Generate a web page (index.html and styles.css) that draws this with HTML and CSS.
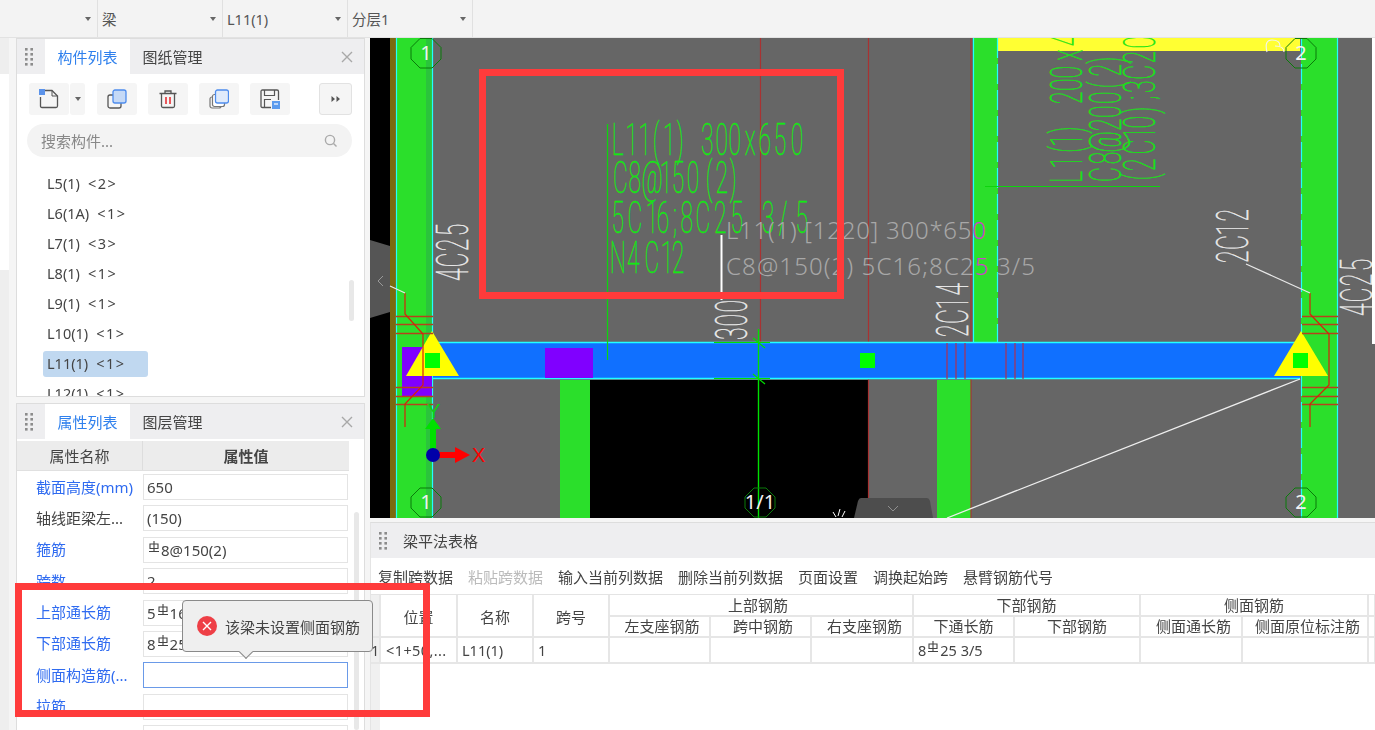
FILE: index.html
```html
<!DOCTYPE html>
<html>
<head>
	<meta charset="utf-8">
	<title>梁平法表格</title>
	<link rel="stylesheet" href="styles.css">
</head>

<body>
	<svg class="defs" width="0" height="0">
		<symbol id="dots" viewBox="0 0 8 18">
			<g fill="#8c8c8c">
				<rect x="0" y="0" width="2.6" height="2.6"/><rect x="5.4" y="0" width="2.6" height="2.6"/>
				<rect x="0" y="5" width="2.6" height="2.6"/><rect x="5.4" y="5" width="2.6" height="2.6"/>
				<rect x="0" y="10" width="2.6" height="2.6"/><rect x="5.4" y="10" width="2.6" height="2.6"/>
				<rect x="0" y="15" width="2.6" height="2.6"/><rect x="5.4" y="15" width="2.6" height="2.6"/>
			</g>
		</symbol>
		<symbol id="rebar" viewBox="0 0 12 12">
			<path d="M6 0V11M2 3H10V7.5H2ZM1 10.5H11" fill="none" stroke="#444" stroke-width="1.1"/>
		</symbol>
	</svg>

	<div class="topbar">
		<div class="top-item top-first"><span class="caret"></span></div>
		<div class="top-item"><span>梁</span><span class="caret"></span></div>
		<div class="top-item"><span>L11(1)</span><span class="caret"></span></div>
		<div class="top-item"><span>分层1</span><span class="caret"></span></div>
	</div>

	<div class="main">
		<div class="sidebar">
			<div class="strip">
				<div class="strip-head"></div>
				<div class="strip-body"></div>
				<div class="strip-rest"></div>
			</div>

			<div class="panels">
				<div class="panel panel-list">
					<div class="panel-head">
						<svg class="dots"><use href="#dots"/></svg>
						<div class="tab active">构件列表</div>
						<div class="tab">图纸管理</div>
						<svg class="close" viewBox="0 0 12 12"><path d="M1 1L11 11M11 1L1 11" stroke="#a8a8a8" stroke-width="1.4"/></svg>
					</div>

					<div class="tools">
						<div class="tool tool-new">
							<svg viewBox="0 0 20 20" width="20" height="20"><path d="M6 1.5H13L18.5 7V17Q18.5 18.5 17 18.5H3Q1.5 18.5 1.5 17V8" fill="none" stroke="#555" stroke-width="1.3"/><path d="M13 1.5V7H18.5" fill="none" stroke="#555" stroke-width="1"/><rect x="0" y="0" width="6" height="6" fill="#5b93ea"/></svg>
						</div>
						<div class="tool tool-drop"><span class="caret"></span></div>
						<div class="tool">
							<svg viewBox="0 0 20 20" width="20" height="20"><rect x="1" y="6" width="13" height="13" rx="2" fill="none" stroke="#555" stroke-width="1.3"/><rect x="6" y="1" width="13" height="13" rx="2" fill="#c5d9f6" stroke="#4d8ced" stroke-width="1.3"/></svg>
						</div>
						<div class="tool">
							<svg viewBox="0 0 20 20" width="20" height="20"><path d="M1.5 4.5H18.5M7 4.5V2H13V4.5M3.5 4.5V17Q3.5 18.5 5 18.5H15Q16.5 18.5 16.5 17V4.5" fill="none" stroke="#555" stroke-width="1.3"/><path d="M8 8V15M12 8V15" stroke="#e8474c" stroke-width="1.8"/></svg>
						</div>
						<div class="tool">
							<svg viewBox="0 0 20 20" width="20" height="20"><rect x="1" y="8" width="11" height="11" rx="2" fill="none" stroke="#777" stroke-width="1.2"/><rect x="3.5" y="5.5" width="12" height="12" rx="2" fill="#fff" stroke="#777" stroke-width="1.2"/><rect x="6.5" y="1" width="13" height="13" rx="2" fill="#e0ebfb" stroke="#4d8ced" stroke-width="1.3"/></svg>
						</div>
						<div class="tool">
							<svg viewBox="0 0 20 20" width="20" height="20"><path d="M11 18.5H2.5Q1 18.5 1 17V2.5Q1 1 2.5 1H17Q18.5 1 18.5 2.5V11" fill="none" stroke="#555" stroke-width="1.3"/><path d="M4.5 1V6.5H14.5V1M4.5 18V10.5H11" fill="none" stroke="#555" stroke-width="1.2"/><rect x="12" y="12" width="8" height="8" fill="#5b9bee"/><path d="M14 15H18" stroke="#fff" stroke-width="1.2"/></svg>
						</div>
						<div class="tool tool-more">
							<svg viewBox="0 0 10 8" width="10" height="8"><path d="M0.5 1L4 4L0.5 7ZM5.5 1L9 4L5.5 7Z" fill="#555"/></svg>
						</div>
					</div>

					<div class="search">
						<span>搜索构件...</span>
						<svg viewBox="0 0 14 14" width="14" height="14"><circle cx="6" cy="6" r="4.6" fill="none" stroke="#aaa" stroke-width="1.4"/><path d="M9.5 9.5L12.5 12.5" stroke="#aaa" stroke-width="1.4"/></svg>
					</div>

					<div class="list">
						<div class="list-item"><span>L5(1)<b>&lt;2&gt;</b></span></div>
						<div class="list-item"><span>L6(1A)<b>&lt;1&gt;</b></span></div>
						<div class="list-item"><span>L7(1)<b>&lt;3&gt;</b></span></div>
						<div class="list-item"><span>L8(1)<b>&lt;1&gt;</b></span></div>
						<div class="list-item"><span>L9(1)<b>&lt;1&gt;</b></span></div>
						<div class="list-item"><span>L10(1)<b>&lt;1&gt;</b></span></div>
						<div class="list-item selected"><span>L11(1)<b>&lt;1&gt;</b></span></div>
						<div class="list-item"><span>L12(1)<b>&lt;1&gt;</b></span></div>
						<div class="scroll scroll-list"></div>
					</div>
				</div>

				<div class="panel panel-props">
					<div class="panel-head">
						<svg class="dots"><use href="#dots"/></svg>
						<div class="tab active">属性列表</div>
						<div class="tab">图层管理</div>
						<svg class="close" viewBox="0 0 12 12"><path d="M1 1L11 11M11 1L1 11" stroke="#a8a8a8" stroke-width="1.4"/></svg>
					</div>

					<div class="prop-head">
						<div class="prop-head-name">属性名称</div>
						<div class="prop-head-value">属性值</div>
					</div>

					<div class="prop-rows">
						<div class="prop-row"><div class="prop-name link">截面高度(mm)</div><div class="prop-value">650</div></div>
						<div class="prop-row"><div class="prop-name">轴线距梁左...</div><div class="prop-value">(150)</div></div>
						<div class="prop-row"><div class="prop-name link">箍筋</div><div class="prop-value"><svg class="rebar"><use href="#rebar"/></svg>8@150(2)</div></div>
						<div class="prop-row"><div class="prop-name link">跨数</div><div class="prop-value">2</div></div>
						<div class="prop-row"><div class="prop-name link">上部通长筋</div><div class="prop-value">5<svg class="rebar"><use href="#rebar"/></svg>16</div></div>
						<div class="prop-row"><div class="prop-name link">下部通长筋</div><div class="prop-value">8<svg class="rebar"><use href="#rebar"/></svg>25 3/5</div></div>
						<div class="prop-row"><div class="prop-name link">侧面构造筋(...</div><div class="prop-value focused"></div></div>
						<div class="prop-row"><div class="prop-name link">拉筋</div><div class="prop-value"></div></div>
						<div class="prop-row"><div class="prop-name"></div><div class="prop-value"></div></div>
					</div>
					<div class="scroll scroll-props"></div>
				</div>
			</div>
		</div>

		<div class="workspace">
			<div class="canvas">
				<svg class="drawing" viewBox="370 38 1005 480" width="1005" height="480">
					<rect x="370" y="38" width="1005" height="480" fill="#666"/>
					<rect x="370" y="38" width="20" height="480" fill="#000"/>
					<path d="M370 240L390 246V312L370 318Z" fill="#555"/>
					<path d="M383 276L378 281L383 286" fill="none" stroke="#999" stroke-width="1"/>
					<rect x="590" y="380" width="278" height="138" fill="#000"/>
					<rect x="998" y="38" width="302" height="13" fill="#ffff33"/>

					<rect x="390" y="38" width="6" height="480" fill="#7a6a10"/>
					<rect x="396" y="38" width="37" height="480" fill="#2bdf2b"/>
					<rect x="426" y="38" width="6" height="480" fill="#2bc43c"/>
					<rect x="560" y="380" width="30" height="138" fill="#2bdf2b"/>
					<rect x="937" y="380" width="34" height="138" fill="#2bdf2b"/>
					<rect x="973" y="38" width="25" height="304" fill="#2bdf2b"/>
					<rect x="1301" y="38" width="37" height="480" fill="#2bdf2b"/>

					<path d="M396.5 38V518M432.5 38V518M973.5 38V342M1337.5 38V518" stroke="#2ff" stroke-width="1.2"/>
					<path d="M997.5 38V342M1301.5 38V518" stroke="#2ff" stroke-width="1.2" stroke-dasharray="20 6"/>
					<path d="M760.5 38V342M868.5 38V518M971 38V518" stroke="#a83232" stroke-width="1.2"/>

					<rect x="433" y="342" width="867" height="37" fill="#1070ff"/>
					<path d="M433 342.5H1300M433 378.5H1300" stroke="#2ff" stroke-width="1.6"/>
					<path d="M947 343V379M956 343V379M965 343V379M1006 343V379M1015 343V379M1023 343V379" stroke="#b03050" stroke-width="1.2"/>

					<rect x="402" y="347" width="30" height="50" fill="#8000ff"/>
					<rect x="545" y="348" width="48" height="30" fill="#8000ff"/>
					<path d="M432 331L459 376H406Z" fill="#ffff00"/>
					<path d="M1301 331L1328 376H1274Z" fill="#ffff00"/>
					<rect x="425" y="353" width="15" height="15" fill="#00ff00"/>
					<rect x="860" y="353" width="15" height="15" fill="#00ff00"/>
					<rect x="1293" y="353" width="15" height="15" fill="#00ff00"/>

					<path d="M396 316.5H433M396 324.5H433M396 333.5H433M396 387.5H433M396 396.5H433M396 404.5H433M1302 316.5H1338M1302 324.5H1338M1302 333.5H1338M1302 387.5H1338M1302 396.5H1338M1302 404.5H1338" stroke="#b8401c" stroke-width="1.3"/>
					<path d="M405 293V314L423 334V385L405 404V427M1310 293V314L1329 334V385L1310 404V427" fill="none" stroke="#d8200c" stroke-width="1.2"/>
					<path d="M390 286L405 293M1246 264L1310 293" stroke="#e8e8e8" stroke-width="1.2" fill="none"/>
					<path d="M947 518L1300 379" stroke="#eee" stroke-width="1.3"/>

					<path d="M607.5 124V360M985 186.5H1160" stroke="#0ed40e" stroke-width="1.2"/>
					<path d="M758.5 329V518" stroke="#00e000" stroke-width="1.4"/>
					<path d="M714 342.5H770M714 378.5H770M753 338L765 348M753 374L765 384" stroke="#00e000" stroke-width="1.2"/>
					<path d="M721.5 235V300" stroke="#fff" stroke-width="2"/>

					<text class="cad cad-green" transform="translate(612 155) scale(.52 1)" x="11 38 63 85 110 131 156 183 211 236 266 294 323 356">L11(1) 300x650</text>
					<text class="cad cad-green" transform="translate(612 193) scale(.52 1)" x="16 44 77 104 127 156 187 211 233">C8@150(2)</text>
					<text class="cad cad-green" transform="translate(612 233) scale(.52 1)" x="11 44 77 98 121 144 175 208 240 269 300 329 365">5C16;8C25 3/5</text>
					<text class="cad cad-green" transform="translate(612 273) scale(.52 1)" x="11 41 77 106 127">N4C12</text>

					<text class="cad cad-green" transform="translate(1082 182) rotate(-90) scale(.52 1)" x="10 38 63 80 100 130 162 187 211 244 273 302 329">L1(1) 200x400</text>
					<text class="cad cad-green" transform="translate(1121 182) rotate(-90) scale(.52 1)" x="14 46 77 110 135 162 187 215 234">C8@200(2)</text>
					<text class="cad cad-green" transform="translate(1155 182) rotate(-90) scale(.52 1)" x="10 33 67 94 115 138 162 183 211 240 269">(2C10);3C20</text>

					<text class="cad cad-white" transform="translate(468 283) rotate(-90) scale(.52 1)" x="16 44 73 102">4C25</text>
					<text class="cad cad-white" transform="translate(747 342) rotate(-90) scale(.52 1)" x="16 42 69">300</text>
					<text class="cad cad-white" transform="translate(968 338) rotate(-90) scale(.52 1)" x="14 41 67 94">2C14</text>
					<text class="cad cad-white" transform="translate(1248 264) rotate(-90) scale(.52 1)" x="14 41 67 94">2C12</text>
					<text class="cad cad-white" transform="translate(1372 318) rotate(-90) scale(.52 1)" x="16 44 73 102">4C25</text>
					<path d="M1267 52Q1264 40 1272 40Q1280 40 1280 46M1275 46Q1284 46 1284 52" fill="none" stroke="#f4f4f4" stroke-width="1.1"/>

					<text class="hover-text" x="726" y="239" textLength="260" lengthAdjust="spacing">L11(1) [1220] 300*65<tspan class="hover-mark">0</tspan></text>
					<text class="hover-text" x="726" y="275" textLength="309" lengthAdjust="spacing">C8@150(2) 5C16;8C2<tspan class="hover-mark">5</tspan> 3/5</text>

					<g fill="none" stroke="#0a7a0a" stroke-width="1">
						<path d="M420 38.5H432L441 47.5V59L432 68H420L411 59V47.5Z"/>
						<path d="M1295 38.5H1307L1316 47.5V59L1307 68H1295L1286 59V47.5Z"/>
						<path d="M420 488H432L441 497V508L432 517H420L411 508V497Z"/>
						<path d="M1295 488H1307L1316 497V508L1307 517H1295L1286 508V497Z"/>
						<path d="M754 488H766L775 497V508L766 517H754L745 508V497Z"/>
					</g>
					<text class="bubble-text" x="426" y="60">1</text>
					<text class="bubble-text" x="1301" y="60">2</text>
					<text class="bubble-text" x="426" y="509">1</text>
					<text class="bubble-text" x="1301" y="509">2</text>
					<text class="bubble-text" x="760" y="509">1/1</text>

					<path d="M430 455V429H425L433 418L441 429H436V455Z" fill="#00e000"/>
					<path d="M433 452H455V447L470 455L455 463V458H433Z" fill="#ff0000"/>
					<circle cx="433" cy="455" r="7" fill="#0000a8"/>
					<text class="axis-x" x="472" y="462">X</text>
					<text class="axis-y" x="427" y="418">Y</text>

					<path d="M833 512L836 517M840 509L838 516M845 511L842 517" fill="none" stroke="#fff" stroke-width="1"/>
					<path d="M861 498H927Q929 498 930 501L933 518H854L858 501Q859 498 861 498Z" fill="#4d4d4d"/>
					<path d="M888 506L893 511L898 506" fill="none" stroke="#8f8f8f" stroke-width="1"/>
					<rect x="1372" y="38" width="3" height="306" fill="#fff"/>
				</svg>
			</div>

			<div class="table-panel">
				<div class="table-head">
					<svg class="dots"><use href="#dots"/></svg>
					<span>梁平法表格</span>
				</div>
				<div class="table-tools">
					<span>复制跨数据</span>
					<span class="disabled">粘贴跨数据</span>
					<span>输入当前列数据</span>
					<span>删除当前列数据</span>
					<span>页面设置</span>
					<span>调换起始跨</span>
					<span>悬臂钢筋代号</span>
				</div>
				<div class="table-wrap">
					<table class="grid">
						<colgroup>
							<col class="c-idx"><col class="c-pos"><col class="c-name"><col class="c-span">
							<col class="c-a"><col class="c-b"><col class="c-c"><col class="c-d">
							<col class="c-e"><col class="c-f"><col class="c-g"><col class="c-h">
						</colgroup>
						<tr class="r-top">
							<th rowspan="2" class="idx"></th>
							<th rowspan="2" class="tall">位置</th>
							<th rowspan="2" class="tall">名称</th>
							<th rowspan="2" class="tall">跨号</th>
							<th colspan="3" class="pull">上部钢筋</th>
							<th colspan="2">下部钢筋</th>
							<th colspan="2">侧面钢筋</th>
							<th></th>
						</tr>
						<tr class="r-sub">
							<th class="push">左支座钢筋</th>
							<th class="push">跨中钢筋</th>
							<th class="push">右支座钢筋</th>
							<th>下通长筋</th>
							<th>下部钢筋</th>
							<th class="push">侧面通长筋</th>
							<th class="push">侧面原位标注筋</th>
							<th></th>
						</tr>
						<tr class="r-data">
							<td class="idx">1</td>
							<td class="wide">&lt;1+50,...</td>
							<td>L11(1)</td>
							<td>1</td>
							<td></td><td></td><td></td>
							<td>8<svg class="rebar"><use href="#rebar"/></svg>25 3/5</td>
							<td></td><td></td><td></td><td></td>
						</tr>
					</table>
				</div>
			</div>
		</div>
	</div>

	<div class="tooltip">
		<svg viewBox="0 0 20 20" width="20" height="20"><circle cx="10" cy="10" r="10" fill="#ee3f46"/><path d="M6 6L14 14M14 6L6 14" stroke="#fff" stroke-width="1.4"/></svg>
		<span>该梁未设置侧面钢筋</span>
		<i class="tooltip-arrow"></i>
	</div>

	<div class="mark mark-canvas"></div>
	<div class="mark mark-props"></div>
</body>
</html>
```

FILE: styles.css
```css
* {
	box-sizing: border-box;
}

body, html {
	margin: 0;
	padding: 0;
	width: 1375px;
	height: 730px;
	overflow: hidden;
}

body {
	position: relative;
	background: #f5f5f5;
	color: #444;
	font-family: "Noto Sans", "Noto Sans CJK SC", sans-serif;
	font-size: 15px;
	filter: blur(.3px);
}

.defs {
	position: absolute;
}

.caret {
	display: inline-block;
	width: 0;
	height: 0;
	border-left: 3px solid transparent;
	border-right: 3px solid transparent;
	border-top: 4px solid #666;
}

/* top selector bar */
.topbar {
	display: flex;
	height: 38px;
	background: #f3f3f3;
	border-bottom: 1px solid #e2e2e2;
}

.top-item {
	display: flex;
	align-items: center;
	justify-content: space-between;
	width: 125px;
	height: 37px;
	padding: 0 6px 0 4px;
	border-right: 1px solid #e0e0e0;
	font-size: 14.5px;
	color: #555;
}

.top-first {
	width: 98px;
	justify-content: flex-end;
}

/* left side */
.main {
	display: flex;
	height: 692px;
}

.sidebar {
	display: flex;
	width: 370px;
	flex-shrink: 0;
}

.strip {
	display: flex;
	flex-direction: column;
	width: 9px;
	margin-right: 7px;
}

.strip-head {
	height: 36px;
	background: #eee;
}

.strip-body {
	height: 196px;
	background: #fff;
}

.strip-rest {
	flex: 1;
	background: #eee;
}

.panels {
	display: flex;
	flex-direction: column;
	gap: 6px;
	width: 349px;
}

.panel {
	position: relative;
	background: #fff;
	border: 1px solid #ddd;
	overflow: hidden;
}

.panel-list {
	height: 359px;
	flex-shrink: 0;
}

.panel-props {
	flex: 1;
	border-bottom: 0;
}

.panel-head {
	display: flex;
	align-items: center;
	height: 35px;
	background: #eeeef0;
}

.dots {
	width: 8px;
	height: 18px;
	margin: 0 12px 0 8px;
	flex-shrink: 0;
}

.tab {
	display: flex;
	align-items: center;
	justify-content: center;
	width: 85px;
	height: 35px;
	font-size: 15px;
	color: #444;
}

.tab.active {
	background: #fff;
	color: #2f80ed;
}

.close {
	width: 12px;
	height: 12px;
	margin-left: auto;
	margin-right: 11px;
}

.tools {
	display: flex;
	padding: 9px 12px 0;
	height: 41px;
}

.tool {
	display: flex;
	align-items: center;
	justify-content: center;
	width: 40px;
	height: 32px;
	margin-right: 11px;
	background: #f5f5f5;
	border-radius: 3px;
}

.tool-new {
	margin-right: 1px;
}

.tool-drop {
	width: 15px;
	margin-right: 12px;
}

.tool-more {
	width: 33px;
	margin-left: auto;
	margin-right: 0;
	border: 1px solid #e2e2e2;
}

.search {
	display: flex;
	align-items: center;
	justify-content: space-between;
	height: 33px;
	margin: 9px 12px 0 10px;
	padding: 0 14px;
	background: #f3f3f3;
	border-radius: 17px;
	color: #888;
	font-size: 15px;
}

.list {
	position: relative;
	padding: 12px 0 0 26px;
}

.list-item {
	height: 30px;
	display: flex;
	align-items: center;
	font-size: 14.5px;
	color: #444;
}

.list-item span {
	padding: 0 4px;
	height: 26px;
	line-height: 24px;
	border-radius: 3px;
}

.list-item b {
	margin-left: 8px;
	font-weight: 400;
	letter-spacing: 1.5px;
}

.list-item.selected span {
	width: 105px;
	background: #c0d8f0;
}

.scroll {
	position: absolute;
	width: 5px;
	background: #e8e8e8;
	border-radius: 3px;
}

.scroll-list {
	right: 10px;
	top: 123px;
	height: 41px;
}

.scroll-props {
	left: 337px;
	top: 108px;
	bottom: 0;
	height: auto;
}

/* property grid */
.prop-head {
	display: flex;
	width: 332px;
	height: 30px;
	margin-top: 2px;
	background: #ececec;
	border-bottom: 1px solid #e0e0e0;
	font-size: 15px;
}

.prop-head-name {
	width: 126px;
	text-align: center;
	line-height: 31px;
	border-right: 1px solid #ddd;
}

.prop-head-value {
	flex: 1;
	text-align: center;
	line-height: 31px;
	font-weight: 700;
}

.prop-rows {
	display: flex;
	flex-direction: column;
	gap: 5.4px;
	padding-top: 3px;
}

.prop-row {
	display: flex;
	align-items: center;
	height: 26px;
	flex-shrink: 0;
}

.prop-name {
	width: 126px;
	padding: 0 0 2px 19px;
	white-space: nowrap;
	font-size: 15px;
}

.prop-name.link {
	color: #2f6bf0;
}

.prop-value {
	width: 205px;
	height: 26px;
	padding-left: 3px;
	line-height: 25px;
	border: 1px solid #e4e4e4;
	font-size: 15px;
	white-space: nowrap;
}

.prop-value.focused {
	border-color: #6a9ae8;
}

.rebar {
	width: 12px;
	height: 12px;
	vertical-align: 3px;
	margin: 0 1px;
}

/* drawing area */
.workspace {
	display: flex;
	flex-direction: column;
	flex: 1;
	min-width: 0;
}

.canvas {
	height: 480px;
	flex-shrink: 0;
}

.drawing {
	display: block;
}

.cad {
	font-family: Roboto, sans-serif;
	font-weight: 100;
	font-size: 44px;
	text-anchor: middle;
}

.cad-green {
	fill: #14f014;
	stroke: #14e014;
	stroke-width: 0.5;
}

.cad-white {
	fill: #eee;
	stroke: #eee;
	stroke-width: 0.5;
}

.hover-text {
	font-family: "Noto Sans", sans-serif;
	font-weight: 300;
	font-size: 24px;
	fill: #a8a8a8;
}

.hover-mark {
	fill: #d040d0;
}

.bubble-text {
	font-family: "Noto Sans", sans-serif;
	font-size: 20px;
	fill: #f2f2f2;
	text-anchor: middle;
}

.axis-x, .axis-y {
	font-family: "Liberation Sans", sans-serif;
	font-size: 20px;
	font-weight: 400;
}

.axis-x {
	fill: #f00;
}

.axis-y {
	fill: #10d010;
}

/* bottom table */
.table-panel {
	flex: 1;
	margin-top: 4px;
	background: #fff;
	border-top: 1px solid #ddd;
	border-left: 1px solid #e4e4e4;
	min-height: 0;
	overflow: hidden;
}

.table-head {
	display: flex;
	align-items: center;
	height: 35px;
	padding-left: 8px;
	background: #eeeef0;
	font-size: 15px;
}

.table-head .dots {
	margin: 0 16px 0 0;
}

.table-tools {
	display: flex;
	align-items: center;
	gap: 15px;
	height: 37px;
	padding-left: 7px;
	font-size: 15px;
	color: #444;
	border-bottom: 1px solid #e4e4e4;
}

.table-tools .disabled {
	color: #bbb;
}

.table-wrap {
	overflow: hidden;
	background: linear-gradient(to right, #f0f0f0 9px, #fff 9px);
	height: 140px;
}

.grid {
	table-layout: fixed;
	width: 1004px;
	border-collapse: collapse;
	font-size: 15px;
}

.grid th, .grid td {
	padding: 0;
	border: 1px solid #e6e6e6;
	border-width: 0 2px 2px 0;
	font-weight: 400;
	color: #444;
	overflow: hidden;
	white-space: nowrap;
}

.grid th {
	text-align: center;
	line-height: 19px;
}

.grid .tall {
	padding-top: 3px;
}

.grid .push {
	padding-left: 5px;
}

.grid .pull {
	padding-right: 6px;
}

.grid td {
	padding-left: 4px;
	font-size: 14.5px;
}

.grid .wide {
	padding-left: 5px;
	letter-spacing: .4px;
}

.grid .idx {
	background: #f0f0f0;
	padding: 0;
	text-align: center;
}

.r-top {
	height: 21px;
}

.r-sub {
	height: 21px;
}

.r-data {
	height: 26px;
	background: #fff;
}

.c-idx { width: 9px; }
.c-pos { width: 77px; }
.c-name { width: 76px; }
.c-span { width: 76px; }
.c-a { width: 101px; }
.c-b { width: 101px; }
.c-c { width: 102px; }
.c-d { width: 101px; }
.c-e { width: 126px; }
.c-f { width: 102px; }
.c-g { width: 126px; }
.c-h { width: 7px; }

/* popup and the review marks lying over the page */
.tooltip {
	position: absolute;
	left: 182px;
	top: 600px;
	display: flex;
	align-items: center;
	gap: 8px;
	width: 191px;
	height: 52px;
	padding-left: 14px;
	background: #efefef;
	border: 1px solid #8a8a8a;
	border-radius: 4px;
	font-size: 15px;
	color: #444;
	white-space: nowrap;
}

.tooltip-arrow {
	position: absolute;
	left: 58px;
	bottom: -6px;
	width: 10px;
	height: 10px;
	background: #efefef;
	border-right: 1px solid #8a8a8a;
	border-bottom: 1px solid #8a8a8a;
	transform: rotate(45deg);
}

.mark {
	position: absolute;
	border: 7px solid #ff3b3b;
}

.mark-canvas {
	left: 479px;
	top: 69px;
	width: 365px;
	height: 230px;
}

.mark-props {
	left: 15px;
	top: 583px;
	width: 415px;
	height: 134px;
}
```
